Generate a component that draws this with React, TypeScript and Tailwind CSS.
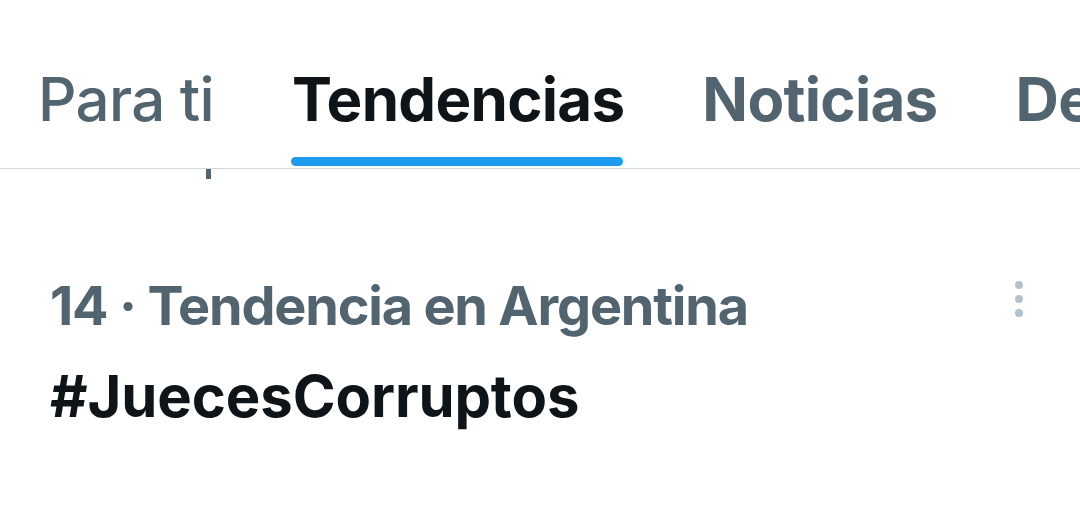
import React from 'react'

const tabs = [
  { label: 'Para ti', active: false, weight: 'font-medium' },
  { label: 'Tendencias', active: true, weight: 'font-bold' },
  { label: 'Noticias', active: false, weight: 'font-bold' },
  { label: 'Deportes', active: false, weight: 'font-bold' },
]

export default function App() {
  return (
    <div
      className="w-[1080px] h-[531px] overflow-hidden bg-white"
      style={{ fontFamily: 'Inter, "Noto Sans", sans-serif' }}
    >
      {/* tabs */}
      <div className="flex h-[169px] border-b border-[#cfd9de] pl-[38px] pt-[69px] gap-[78px] whitespace-nowrap overflow-hidden">
        {tabs.map((t) => (
          <div key={t.label} className="flex flex-col items-stretch shrink-0">
            <span
              className={`text-[60px] leading-none tracking-[-0.7px] ${t.weight} ${
                t.active ? 'text-[#0f1419]' : 'text-[#536471]'
              }`}
            >
              {t.label}
            </span>
            <div
              className={`mt-[28px] h-[9px] rounded-full ml-[-1px] mr-[1px] ${
                t.active ? 'bg-[#1d9bf0]' : 'bg-transparent'
              }`}
            />
          </div>
        ))}
      </div>

      {/* previous item tail */}
      <div className="pl-[206px]">
        <div className="w-[5px] h-[10px] bg-[#536471]" />
      </div>

      {/* trend item */}
      <div className="flex justify-between items-start pl-[50px] pr-[57px] pt-[100px]">
        <div className="flex flex-col">
          <span className="text-[54px] leading-none font-bold text-[#536471] tracking-[-1.2px]">
            14 · Tendencia en Argentina
          </span>
          <span className="mt-[34px] text-[58px] leading-none font-bold text-[#0f1419] tracking-[-0.1px]">
            #JuecesCorruptos
          </span>
        </div>
        <div className="flex flex-col gap-[6px] mt-[2px]">
          <div className="w-[8px] h-[8px] rounded-full bg-[#b3c3ce]" />
          <div className="w-[8px] h-[8px] rounded-full bg-[#b3c3ce]" />
          <div className="w-[8px] h-[8px] rounded-full bg-[#b3c3ce]" />
        </div>
      </div>
    </div>
  )
}
